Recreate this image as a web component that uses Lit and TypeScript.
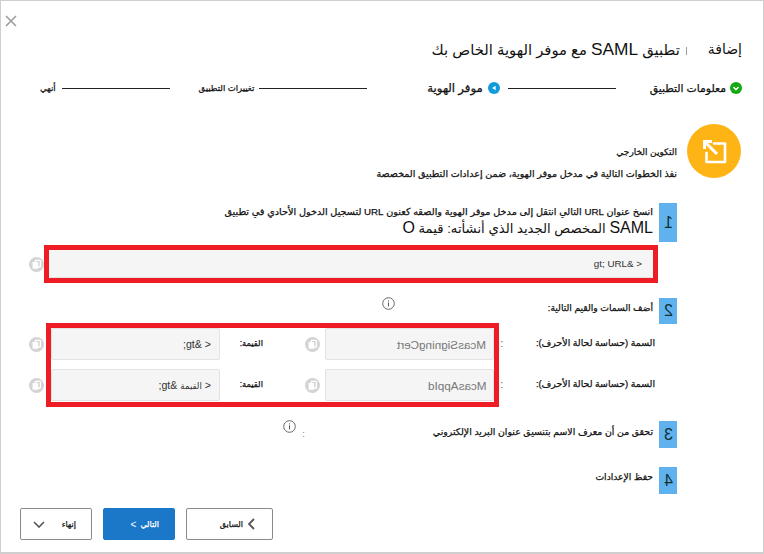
import { LitElement, html, css } from "lit";
import { customElement } from "lit/decorators.js";

const copyIcon = html`<svg class="copy" viewBox="0 0 15 15" aria-hidden="true">
  <circle cx="7.5" cy="7.5" r="7.5" fill="#d4d4d4"></circle>
  <rect x="6.4" y="3.4" width="5" height="6.6" rx="0.6" fill="none" stroke="#fff" stroke-width="1.3"></rect>
  <rect x="3.6" y="5" width="5.6" height="6.8" rx="0.6" fill="#fff"></rect>
</svg>`;

const infoIcon = html`<svg class="info" viewBox="0 0 13 13" aria-hidden="true">
  <circle cx="6.5" cy="6.5" r="5.8" fill="none" stroke="#666" stroke-width="1"></circle>
  <rect x="6" y="5.4" width="1" height="4" fill="#555"></rect>
  <rect x="6" y="3.4" width="1" height="1" fill="#555"></rect>
</svg>`;

@customElement("app-root")
export class AppRoot extends LitElement {
  static styles = css`
    :host {
      display: block;
      width: 764px;
      height: 554px;
      box-sizing: border-box;
      background: #fff;
      border: 1px solid #cfcfcf;
      border-width: 1px 1px 2px 1px;
      font-family: "Liberation Sans", "DejaVu Sans", sans-serif;
      color: #111;
      overflow: hidden;
    }
    .page {
      direction: rtl;
      height: 100%;
      display: flex;
      flex-direction: column;
      position: relative;
    }
    .close {
      position: absolute;
      left: 4px;
      top: 14px;
      width: 12px;
      height: 12px;
    }
    .head {
      display: flex;
      align-items: center;
      height: 26px;
      margin: 35px 21px 0 0;
      font-size: 14.8px;
      line-height: 26px;
    }
    .head .add { font-size: 14px; }
    .head .latin { font-size: 17.3px; }
    .head .sep {
      width: 1px;
      height: 8px;
      background: #9a9a9a;
      margin: 3px 21px 0 6px;
    }
    .stepper {
      display: flex;
      align-items: center;
      height: 20px;
      margin: 16px 21px 0 0;
      -webkit-text-stroke: 0.25px #111;
    }
    .st1 { font-size: 10.8px; }
    .st2 { font-size: 11.7px; margin-right: 5px; }
    .st3 { font-size: 8.5px; margin-right: 5px; }
    .st4 { font-size: 8.5px; margin-right: 6px; }
    .dot { width: 12px; height: 12px; margin-left: 4px; flex: none; }
    .dot.blue { margin: 0 8px 0 0; }
    .line { width: 108px; height: 1px; background: #222; flex: none; }
    .gap34 { margin-right: 34px; }
    .gap60 { margin-right: 60px; }
    .gap29 { margin-right: 29px; }
    .ext {
      display: flex;
      margin: 26px 22px 0 0;
      height: 54px;
    }
    .badge-circle { width: 54px; height: 54px; flex: none; }
    .ext-text {
      margin: 18px 10px 0 0;
      line-height: 21px;
      -webkit-text-stroke: 0.25px #111;
      font-size: 9.55px;
    }
    .ext-text .t1 { font-size: 9px; }
    .step {
      display: flex;
      margin-right: 86px;
    }
    .num {
      width: 18px;
      flex: none;
      background: #5fb2ee;
      color: #133;
      font-size: 16px;
      display: flex;
      align-items: center;
      justify-content: center;
    }
    .num span { display: inline-block; transform: scaleX(-1); }
    .stxt { margin-right: 6px; -webkit-text-stroke: 0.25px #111; }
    .s1 { margin-top: 25px; }
    .s1 .num { height: 39px; }
    .s1 .stxt { line-height: 15px; padding-top: 1px; font-size: 9.7px; }
    .s1 .big { font-size: 13.2px; line-height: 17px; -webkit-text-stroke: 0; }
    .s1 .big b { font-size: 16px; font-weight: 400; }
    .urlrow {
      display: flex;
      align-items: center;
      margin: 3px 105px 0 0;
    }
    .frame { border: 5px solid #ee1c25; box-sizing: border-box; }
    .urlframe { width: 614px; height: 38px; }
    .field {
      box-sizing: border-box;
      background: #f5f5f5;
      border: 1px solid #e2e2e2;
      border-radius: 2px;
      display: flex;
      align-items: center;
      padding: 0 8px;
      font-size: 10.6px;
      color: #333;
    }
    .field .v { direction: ltr; }
    .field .v i { font-style: normal; font-size: 8.6px; }
    .urlframe .field { height: 100%; padding-right: 11px; border-width: 0 0 1px 0; font-size: 9.8px; }
    .copy { width: 15px; height: 15px; flex: none; display: block; }
    .info { width: 13px; height: 13px; display: block; flex: none; }
    .s2 { margin-top: 15px; height: 26px; }
    .s2 .num { height: 26px; }
    .s2 .stxt { line-height: 20px; font-size: 9.2px; }
    .s2 .info { margin-right: 153px; margin-top: -1px; }
    .attrs {
      display: flex;
      margin-top: -1px;
    }
    .attr-labels {
      width: 150px;
      margin-right: 108px;
      flex: none;
      font-size: 9.4px;
      display: flex;
      flex-direction: column;
      -webkit-text-stroke: 0.25px #111;
    }
    .attr-labels div { height: 41px; line-height: 39px; }
    .colon { width: 6px; flex: none; display: flex; flex-direction: column; font-size: 10px; color: #555; }
    .colon div { height: 41px; line-height: 41px; text-align: center; }
    .grid-wrap {
      display: flex;
      align-items: center;
      gap: 2px;
    }
    .frame2 {
      width: 453px;
      height: 84px;
      display: grid;
      grid-template-columns: 169px 105px 169px;
      grid-template-rows: 32px 32px;
      row-gap: 9px;
      align-content: start;
    }
    .lbl {
      display: flex;
      align-items: center;
      gap: 42px;
      padding-right: 5px;
      font-size: 8.4px;
      -webkit-text-stroke: 0.25px #111;
    }
    .lbl span { padding-bottom: 3px; }
    .frame2 .field { height: 32px; }
    .mir {
      display: inline-block;
      transform: scaleX(-1);
      color: #777;
      direction: ltr;
      font-size: 11.7px;
      margin-right: -1px;
    }
    .copies { display: flex; flex-direction: column; gap: 26px; }
    .s3 { margin-top: 14px; }
    .s3 .num { height: 27px; }
    .s3 .stxt { line-height: 22px; font-size: 9.4px; }
    .tick { margin-right: 128px; width: 4px; font-size: 9px; color: #888; line-height: 26px; }
    .s3 .info { margin-right: 5px; margin-top: -1px; }
    .s4 { margin-top: 19px; }
    .s4 .num { height: 27px; }
    .s4 .stxt { line-height: 20px; font-size: 9.2px; }
    .foot {
      display: flex;
      gap: 11px;
      margin: 14px 490px 0 0;
    }
    button {
      font: inherit;
      font-size: 8px;
      box-sizing: border-box;
      height: 32px;
      border: 1px solid #8a8a8a;
      border-radius: 2px;
      background: #fff;
      color: #111;
      display: flex;
      align-items: center;
      padding: 0;
      direction: rtl;
      -webkit-text-stroke: 0.25px currentColor;
    }
    .prev { width: 87px; padding-right: 17px; gap: 5px; }
    .next { width: 72px; background: #1b78c8; border-color: #1b78c8; color: #fff; padding-right: 15px; gap: 4px; }
    .next .gt { font-size: 10px; -webkit-text-stroke: 0; }
    .fin { width: 72px; padding: 0 15px 0 12px; justify-content: space-between; }
    button svg { display: block; flex: none; }
  `;

  render() {
    return html`<div class="page">
      <svg class="close" viewBox="0 0 12 12" aria-label="إغلاق">
        <path d="M1 1 L11 11 M11 1 L1 11" stroke="#9a9a9a" stroke-width="1.5" fill="none"></path>
      </svg>

      <div class="head">
        <span class="add">إضافة</span><span class="sep"></span><span>تطبيق <span class="latin">SAML</span> مع موفر الهوية الخاص بك</span>
      </div>

      <div class="stepper">
        <svg class="dot" viewBox="0 0 12 12"><circle cx="6" cy="6" r="6" fill="#12a80f"></circle><path d="M3.4 5 L6 7.6 L8.6 5" fill="none" stroke="#fff" stroke-width="1.5"></path></svg>
        <span class="st1">معلومات التطبيق</span>
        <span class="line gap34"></span>
        <svg class="dot blue" viewBox="0 0 12 12"><circle cx="6" cy="6" r="6" fill="#0f9bdc"></circle><path d="M7.6 3.8 V8.2 L4.2 6 Z" fill="#fff"></path></svg>
        <span class="st2">موفر الهوية</span>
        <span class="line gap60"></span>
        <span class="st3">تغييرات التطبيق</span>
        <span class="line gap29"></span>
        <span class="st4">أنهي</span>
      </div>

      <div class="ext">
        <svg class="badge-circle" viewBox="0 0 54 54">
          <circle cx="27" cy="27" r="27" fill="#ffb416"></circle>
          <path d="M27 19.5 H38 V38 H19.5 V29" fill="none" stroke="#fff" stroke-width="2.6" stroke-linejoin="round" stroke-linecap="round"></path>
          <path d="M30 30 L19 19 M17.5 25 V17.5 H25" fill="none" stroke="#fff" stroke-width="3"></path>
        </svg>
        <div class="ext-text">
          <div class="t1">التكوين الخارجي</div>
          <div>نفذ الخطوات التالية في مدخل موفر الهوية، ضمن إعدادات التطبيق المخصصة</div>
        </div>
      </div>

      <div class="step s1">
        <div class="num"><span>1</span></div>
        <div class="stxt">
          <div>انسخ عنوان URL التالي انتقل إلى مدخل موفر الهوية والصقه كعنون URL لتسجيل الدخول الأحادي في تطبيق</div>
          <div class="big"><b>SAML</b> المخصص الجديد الذي أنشأته:  قيمة <b>O</b></div>
        </div>
      </div>

      <div class="urlrow">
        <div class="frame urlframe"><div class="field"><span class="v">gt; URL&amp; &gt;</span></div></div>
        ${copyIcon}
      </div>

      <div class="step s2">
        <div class="num"><span>2</span></div>
        <div class="stxt">أضف السمات والقيم التالية:</div>
        ${infoIcon}
      </div>

      <div class="attrs">
        <div class="attr-labels">
          <div>السمة (حساسة لحالة الأحرف):</div>
          <div>السمة (حساسة لحالة الأحرف):</div>
        </div>
        <div class="colon"><div>:</div><div>:</div></div>
        <div class="grid-wrap">
          <div class="frame frame2">
            <div class="field"><span class="mir">McasSigningCert</span></div>
            <div class="lbl">${copyIcon}<span>القيمة:</span></div>
            <div class="field"><span class="v">;gt&amp; &gt;</span></div>
            <div class="field"><span class="mir">McasAppId</span></div>
            <div class="lbl">${copyIcon}<span>القيمة:</span></div>
            <div class="field"><span class="v">;gt&amp; <i>القيمة</i> &gt;</span></div>
          </div>
          <div class="copies">${copyIcon}${copyIcon}</div>
        </div>
      </div>

      <div class="step s3">
        <div class="num"><span>3</span></div>
        <div class="stxt">تحقق من أن معرف الاسم بتنسيق عنوان البريد الإلكتروني</div>
        <span class="tick">:</span>
        ${infoIcon}
      </div>

      <div class="step s4">
        <div class="num"><span>4</span></div>
        <div class="stxt">حفظ الإعدادات</div>
      </div>

      <div class="foot">
        <button class="prev"><svg width="7" height="12" viewBox="0 0 7 12"><path d="M6 1 L1 6 L6 11" fill="none" stroke="#555" stroke-width="1.8"></path></svg><span>السابق</span></button>
        <button class="next"><span>التالي</span><span class="gt">&gt;</span></button>
        <button class="fin"><span>إنهاء</span><svg width="12" height="7" viewBox="0 0 12 7"><path d="M1 1 L6 6 L11 1" fill="none" stroke="#555" stroke-width="1.6"></path></svg></button>
      </div>
    </div>`;
  }
}
